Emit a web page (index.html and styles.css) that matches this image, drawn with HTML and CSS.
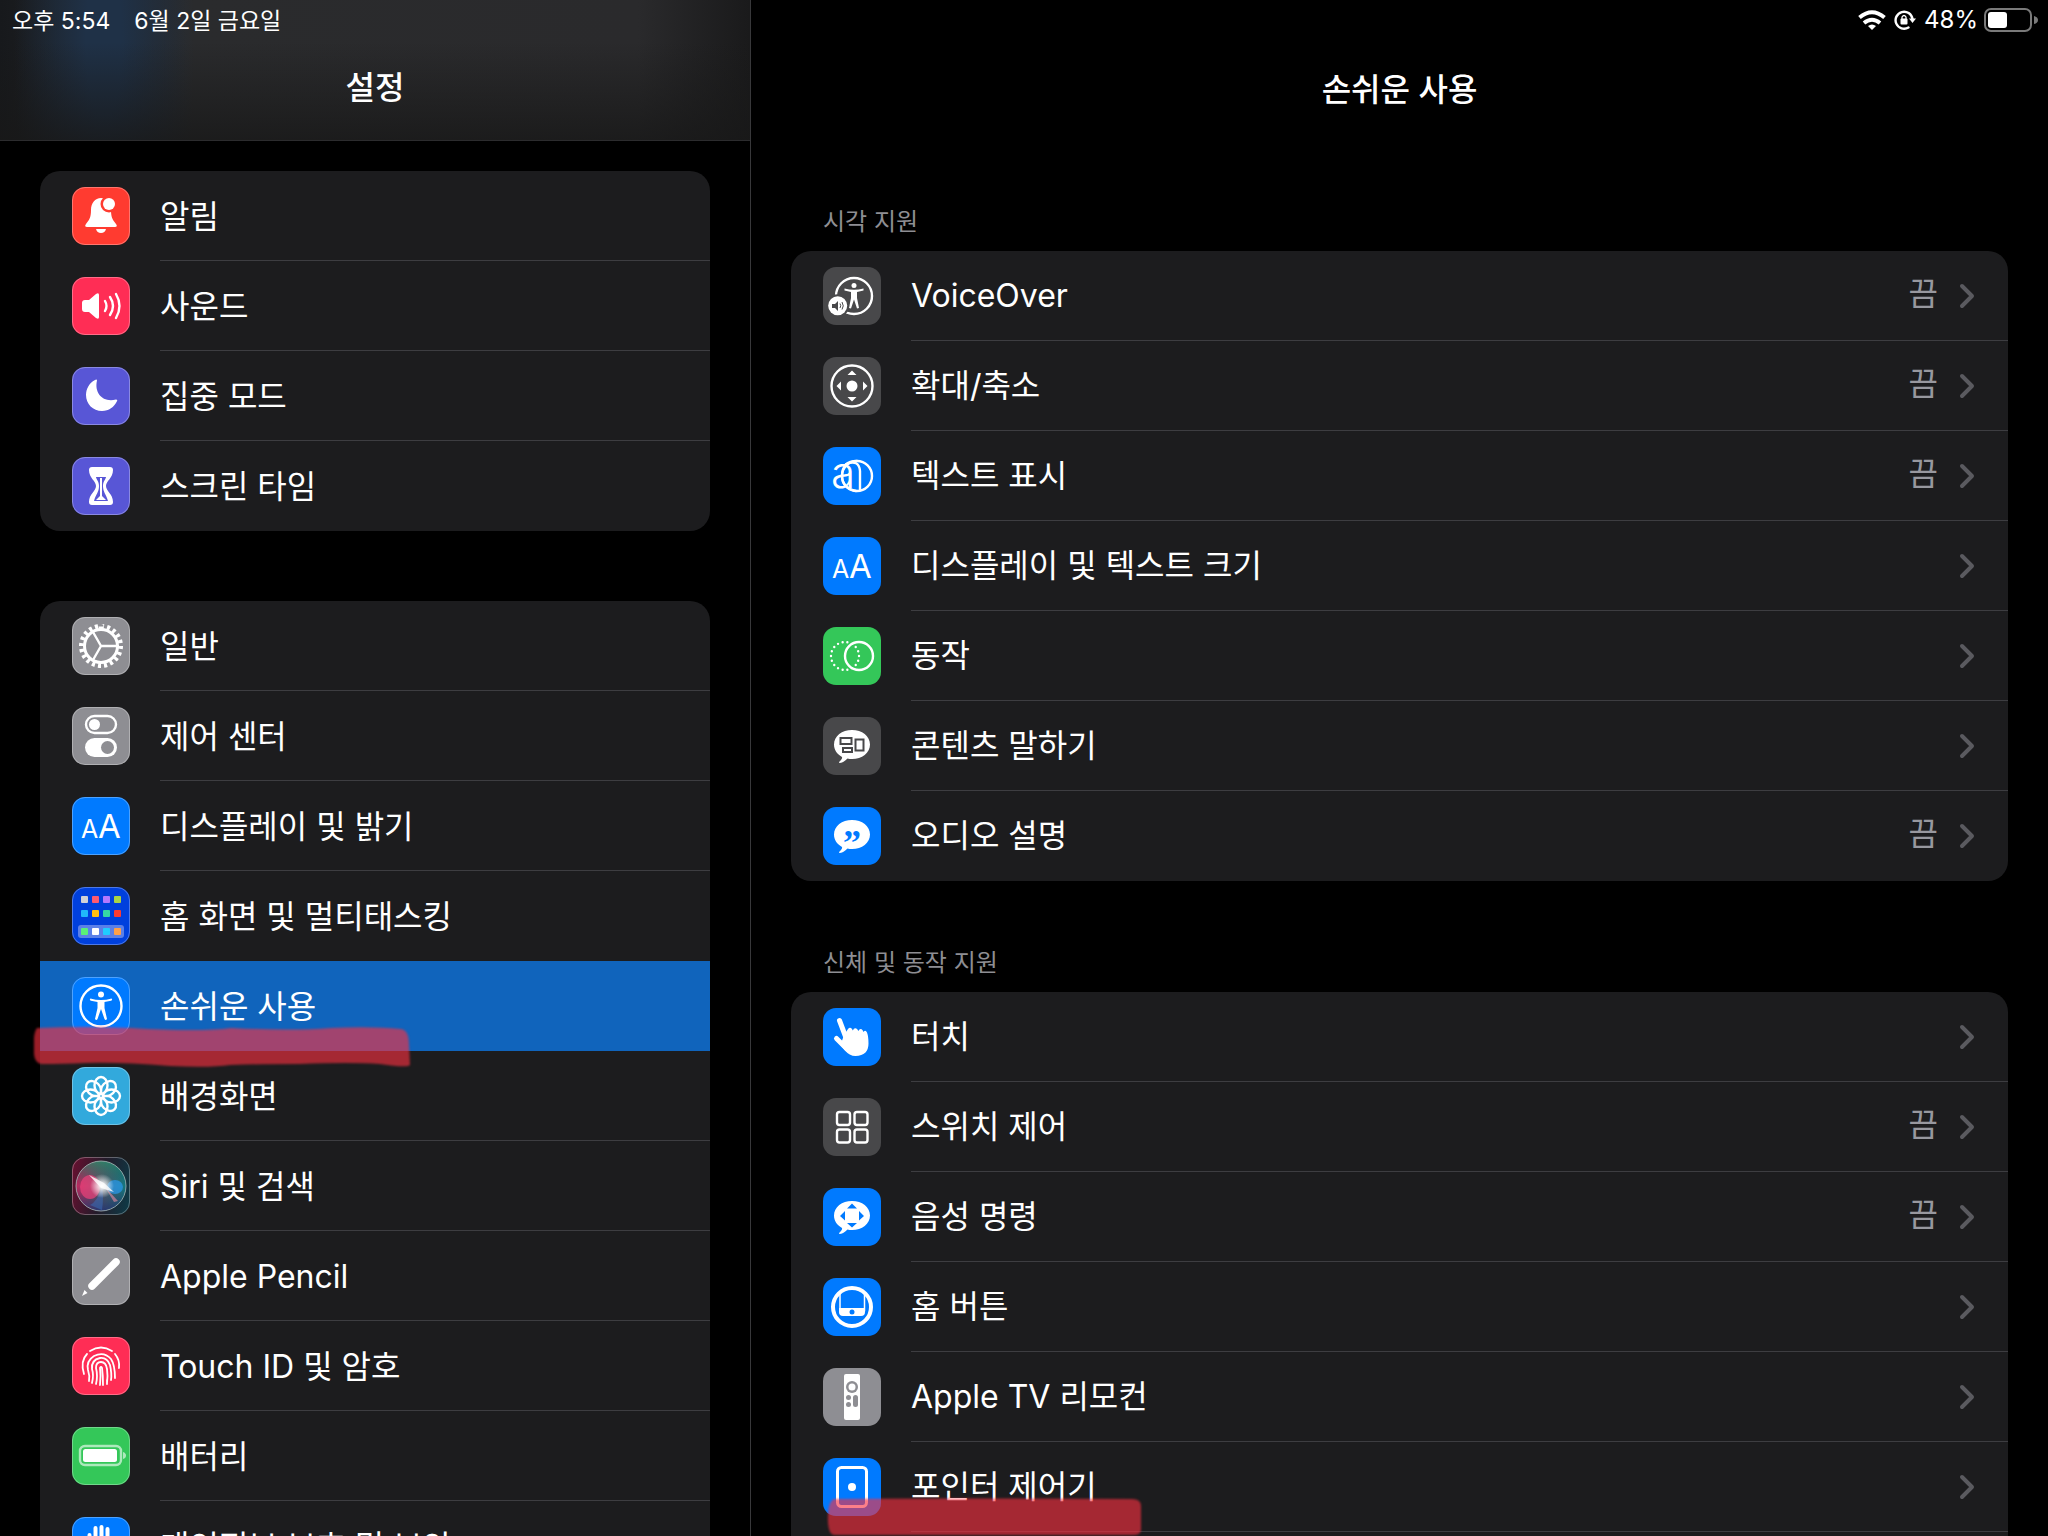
FILE: index.html
```
<!DOCTYPE html>
<html lang="ko">
<head>
<meta charset="utf-8">
<title>설정</title>
<link rel="stylesheet" href="styles.css">
</head>
<body>
<nav class="sidebar">
	<header class="topbar">
		<div class="status"><span>오후 5:54</span><span>6월 2일 금요일</span></div>
		<h1 class="title">설정</h1>
	</header>
	<ul class="card">
		<li><a class="row" href="#">
			<svg class="icon red" viewBox="0 0 58 58"><path d="M29 11c-6 0-10 5-10 12 0 8-2 10-5 14-1.500 2-.8 3 1 3h28c1.800 0 2.500-1 1-3-3-4-5-6-5-14 0-7-4-12-10-12zM24 42h10q-1 4-5 4t-5-4z"/><circle cx="37" cy="17" r="8.500" fill="#ff3b30"/><circle cx="37" cy="17" r="6"/></svg>
			<span class="label">알림</span></a></li>
		<li><a class="row" href="#">
			<svg class="icon pink" viewBox="0 0 58 58"><path d="M10 26q0-3 3-3h4l7-6q3-2 3 1v22q0 3-3 1l-7-6h-4q-3 0-3-3z"/><path class="line thin" d="M33 24q3 5 0 10M38 20q6 9 0 18M44 17q7 12 0 24"/></svg>
			<span class="label">사운드</span></a></li>
		<li><a class="row" href="#">
			<svg class="icon purple" viewBox="0 0 58 58"><path d="M25 13.500C22 26 31 36 44 32.500q2 0 .8 2C42 40 37 44 30 44c-9 0-16-7-16-16 0-6 3-12 9-15q2-1 2 .5z"/></svg>
			<span class="label">집중 모드</span></a></li>
		<li><a class="row" href="#">
			<svg class="icon purple" viewBox="0 0 58 58"><path d="M20 10h18q3 0 3 3c0 8-7 11-7 16s7 8 7 16q0 3-3 3H20q-3 0-3-3c0-8 7-11 7-16s-7-8-7-16q0-3 3-3z"/><path fill="#5856d6" d="M24 20h10c0 2-3 4-3 9 0 6 3 8 5 15H22c2-7 5-9 5-15 0-5-3-7-3-9z"/><path d="M28 21h2v18l4 4H24l4-4z"/></svg>
			<span class="label">스크린 타임</span></a></li>
	</ul>
	<ul class="card">
		<li><a class="row" href="#">
			<svg class="icon gray" viewBox="0 0 58 58"><circle class="line" cx="29" cy="29" r="16.500"/><circle class="line teeth" cx="29" cy="29" r="19.500" pathLength="40"/><path class="line thin" d="M29 29h17M29 29l-8-14M29 29l-8 14"/></svg>
			<span class="label">일반</span></a></li>
		<li><a class="row" href="#">
			<svg class="icon gray" viewBox="0 0 58 58"><rect class="line thin" x="14" y="9" width="30" height="17" rx="8.500"/><circle cx="22.500" cy="17.500" r="5.500"/><rect x="13" y="31" width="32" height="19" rx="9.500"/><circle cx="35.500" cy="40.500" r="6.500" fill="#8e8e93"/></svg>
			<span class="label">제어 센터</span></a></li>
		<li><a class="row" href="#">
			<svg class="icon blue" viewBox="0 0 58 58"><text x="9" y="41" font-size="25">A</text><text x="26" y="41" font-size="33">A</text></svg>
			<span class="label">디스플레이 및 밝기</span></a></li>
		<li><a class="row" href="#">
			<svg class="icon navy" viewBox="0 0 58 58"><rect x="6" y="38" width="46" height="13" rx="3" fill="#5b80e8"/>
				<rect x="9" y="9" width="7" height="7" rx="1" fill="#d1d1d6"/><rect x="20" y="9" width="7" height="7" rx="1" fill="#ff5a70"/><rect x="31" y="9" width="7" height="7" rx="1" fill="#b478ff"/><rect x="42" y="9" width="7" height="7" rx="1" fill="#a8d545"/>
				<rect x="9" y="23" width="7" height="7" rx="1" fill="#20b8fa"/><rect x="20" y="23" width="7" height="7" rx="1" fill="#ffc010"/><rect x="31" y="23" width="7" height="7" rx="1" fill="#35d6a5"/><rect x="42" y="23" width="7" height="7" rx="1" fill="#ff3b30"/>
				<rect x="9" y="41" width="7" height="7" rx="1" fill="#5af078"/><rect x="20" y="41" width="7" height="7" rx="1"/><rect x="31" y="41" width="7" height="7" rx="1" fill="#20ccff"/><rect x="42" y="41" width="7" height="7" rx="1" fill="#ffa04a"/></svg>
			<span class="label">홈 화면 및 멀티태스킹</span></a></li>
		<li class="marked"><a class="row selected" href="#" aria-current="page">
			<svg class="icon blue" viewBox="0 0 58 58"><circle class="line thin" cx="29" cy="29" r="20.500"/><circle cx="29" cy="17.500" r="3"/><path d="M18.500 21.500q5 1.500 10.500 1.500t10.500-1.500q1.500 1.500-.5 2.200l-6.500 1.300v6l2.500 11q-1.500 2-2.500 0l-3.500-10-3.500 10q-1 2-2.500 0l2.500-11v-6l-6.500-1.300q-2-.7-.5-2.200z"/></svg>
			<span class="label">손쉬운 사용</span></a>
			<svg class="ink ink-side" viewBox="0 0 380 44" aria-hidden="true"><path d="M5 3q40-2 92 0 70 4 100 0 60 3 100 0 40-2 70 1 8 1 8 16l1 20q-3 3-30-1-30-2-80 0-40 0-70 1-20 3-60 1-50-4-85-3-20 1-44 1-8-2-7-15-1-16 3-21z"/></svg></li>
		<li><a class="row" href="#">
			<svg class="icon cyan" viewBox="0 0 58 58"><g class="line thin"><ellipse id="petal" cx="29" cy="18.500" rx="6.500" ry="8.500"/><use href="#petal" transform="rotate(45 29 29)"/><use href="#petal" transform="rotate(90 29 29)"/><use href="#petal" transform="rotate(135 29 29)"/><use href="#petal" transform="rotate(180 29 29)"/><use href="#petal" transform="rotate(225 29 29)"/><use href="#petal" transform="rotate(270 29 29)"/><use href="#petal" transform="rotate(315 29 29)"/></g></svg>
			<span class="label">배경화면</span></a></li>
		<li><a class="row" href="#">
			<svg class="icon siri" viewBox="0 0 58 58">
				<defs>
					<linearGradient id="orb" x1="0" y1="0" x2="1" y2="0"><stop offset="0" stop-color="#d32563"/><stop offset=".45" stop-color="#6a6070"/><stop offset="1" stop-color="#108088"/></linearGradient>
					<linearGradient id="shade" x1="0" y1="0" x2="0" y2="1"><stop offset="0" stop-color="#1f8a62" stop-opacity=".7"/><stop offset=".5" stop-color="#203040" stop-opacity=".1"/><stop offset="1" stop-color="#1c2c70" stop-opacity=".8"/></linearGradient>
					<radialGradient id="glow"><stop offset="0" stop-color="#fff"/><stop offset=".3" stop-color="#fff" stop-opacity=".75"/><stop offset="1" stop-color="#fff" stop-opacity="0"/></radialGradient>
				</defs>
				<circle cx="29" cy="29" r="25" fill="url(#orb)"/><circle cx="29" cy="29" r="25" fill="url(#shade)"/>
				<ellipse cx="18" cy="30" rx="10" ry="12" fill="#f0407a" opacity=".7"/><ellipse cx="43" cy="30" rx="8" ry="7" fill="#2a9af0" opacity=".7"/><path d="M33 30l13 14-4 1z" fill="#e88aa0" opacity=".6"/><path d="M30 30q-5 15-12 18l12 5q2-12 0-23z" fill="#3a70c0" opacity=".5"/>
				<circle cx="30" cy="29" r="12" fill="url(#glow)"/><path d="M17 18l15 8 10 9-13-4z" opacity=".8"/><circle cx="29" cy="29" r="25" fill="none" stroke="#a8b8b8" stroke-width="1" opacity=".8"/></svg>
			<span class="label">Siri 및 검색</span></a></li>
		<li><a class="row" href="#">
			<svg class="icon gray" viewBox="0 0 58 58"><path class="line" stroke-width="7.500" d="M44 15L20 39"/><path d="M12.500 43l3 3-5.500 3z"/></svg>
			<span class="label">Apple Pencil</span></a></li>
		<li><a class="row" href="#">
			<svg class="icon pink" viewBox="0 0 58 58"><path class="line fine" d="M18 14q11-7 22 0M12 37q-4-13 3-20M43 17q5 6 4 14M17 44q1-5-1-11-2-9 6-14 10-5 17 3 4 6 4 19M20 46q2-8 0-14-1-9 8-11 7-1 10 7 2 9 1 15M24 47q2-8 0-16 0-6 5-6t6 7q1 7 0 14M28 48q1-9 0-17 1-2 2 0 1 7 1 17M35 43v4"/></svg>
			<span class="label">Touch ID 및 암호</span></a></li>
		<li><a class="row" href="#">
			<svg class="icon green" viewBox="0 0 58 58"><rect class="line thin" x="8" y="19" width="41" height="19" rx="5" opacity=".6"/><rect x="11" y="22" width="34" height="13" rx="2.500"/><path d="M51 25q3 1 3 3.500T51 32z" opacity=".6"/></svg>
			<span class="label">배터리</span></a></li>
		<li><a class="row" href="#">
			<svg class="icon blue" viewBox="0 0 58 58"><path class="line" stroke-width="4" d="M17.500 18v18M23.500 11v22M29.500 10v22M35.500 12v22M43 26l-5 12"/><path d="M15.500 30h22l3 2-3 9q-3 8-10 8-9 0-12-10z"/></svg>
			<span class="label">개인정보 보호 및 보안</span></a></li>
	</ul>
</nav>

<main class="detail">
	<header class="topbar">
		<div class="status status-right">
			<svg class="wifi" viewBox="0 0 28 20"><path d="M14 20l-4-4q4-3 8 0z"/><path class="line" stroke-width="4" stroke-linecap="butt" d="M1.500 7.500q12.500-10.500 25 0M6 13q8-6.500 16 0"/></svg>
			<svg class="lock" viewBox="0 0 22 20"><path class="line thin" d="M14.500 17.500A8.500 8.500 0 1 1 18.500 9"/><path d="M15 8.500h7L18.500 13z"/><rect x="6.500" y="8.500" width="7" height="6" rx="1"/><path class="line" stroke-width="1.300" d="M8 9V7q2-3 4 0v2"/></svg>
			<span class="percent">48%</span>
			<svg class="battery" viewBox="0 0 54 24"><rect x="1" y="1" width="46" height="22" rx="6" fill="none" stroke="#7a7a7a" stroke-width="2"/><rect x="4" y="4" width="19" height="16" rx="3"/><path d="M50 8q4 1 4 4t-4 4z" fill="#7a7a7a"/></svg>
		</div>
		<h1 class="title">손쉬운 사용</h1>
	</header>

	<section>
		<h2 class="caption">시각 지원</h2>
		<ul class="card">
			<li><a class="row" href="#">
				<svg class="icon dark" viewBox="0 0 58 58"><circle class="line thin" cx="31" cy="29" r="18"/><circle cx="31" cy="18.500" r="2.500"/><path d="M21.500 21.500q9.500 2.500 19 0v2l-6.500 1.500v6l2 10-2 .5L31 32.500l-3 9-2-.5 2-10v-6l-6.500-1.500z"/><circle cx="14.700" cy="38.700" r="11.500" fill="#48484a"/><circle cx="14.700" cy="38.700" r="9.500"/><path fill="#48484a" d="M9 37h3l3-3v10l-3-3H9z"/><path d="M17 36.500q1.500 2 0 4.500M19 35q2.500 4 0 7.500" fill="none" stroke="#48484a"/></svg>
				<span class="label">VoiceOver</span><span class="value">끔</span><svg class="chevron" viewBox="0 0 14 24"><path d="M2 2l10 10L2 22"/></svg></a></li>
			<li><a class="row" href="#">
				<svg class="icon dark" viewBox="0 0 58 58"><circle class="line thin" cx="29" cy="29" r="20.500"/><circle cx="29" cy="29" r="5.500"/><path d="M24.500 18l4.500-4.500 4.500 4.500zM24.500 40l4.500 4.500 4.500-4.500zM18 24.500L13.500 29l4.500 4.500zM40 24.500l4.500 4.500-4.500 4.500z"/></svg>
				<span class="label">확대/축소</span><span class="value">끔</span><svg class="chevron" viewBox="0 0 14 24"><path d="M2 2l10 10L2 22"/></svg></a></li>
			<li><a class="row" href="#">
				<svg class="icon blue" viewBox="0 0 58 58"><circle class="line thin" cx="34" cy="29" r="15"/><path class="line thin" d="M34 14q-15 0-15 15 0 12 14 15"/><text class="light" x="8" y="41" font-size="44">a</text><path class="line thin" d="M23 17q13-5 14 7v18"/></svg>
				<span class="label">텍스트 표시</span><span class="value">끔</span><svg class="chevron" viewBox="0 0 14 24"><path d="M2 2l10 10L2 22"/></svg></a></li>
			<li><a class="row" href="#">
				<svg class="icon blue" viewBox="0 0 58 58"><text x="9" y="41" font-size="25">A</text><text x="26" y="41" font-size="33">A</text></svg>
				<span class="label">디스플레이 및 텍스트 크기</span><svg class="chevron" viewBox="0 0 14 24"><path d="M2 2l10 10L2 22"/></svg></a></li>
			<li><a class="row" href="#">
				<svg class="icon green" viewBox="0 0 58 58"><circle class="line dots" cx="22" cy="29" r="14" pathLength="36"/><circle class="line thin" cx="36" cy="29" r="14"/></svg>
				<span class="label">동작</span><svg class="chevron" viewBox="0 0 14 24"><path d="M2 2l10 10L2 22"/></svg></a></li>
			<li><a class="row" href="#">
				<svg class="icon dark" viewBox="0 0 58 58"><path id="bubble" d="M29 13c10 0 18 6 18 14.500S39 42 29 42c-2 0-3 0-4.500-.5-3 3-6 4.500-8 4.500q-1 0 0-1.500c2-2 3-3 2.500-4.500-5-3-8-7-8-12.500C11 19 19 13 29 13z"/><g fill="none" stroke="#48484a" stroke-width="2"><rect x="17.500" y="21" width="11" height="6"/><rect x="20" y="31" width="9" height="4"/><rect x="32.500" y="22.500" width="8" height="11"/></g></svg>
				<span class="label">콘텐츠 말하기</span><svg class="chevron" viewBox="0 0 14 24"><path d="M2 2l10 10L2 22"/></svg></a></li>
			<li><a class="row" href="#">
				<svg class="icon blue" viewBox="0 0 58 58"><use href="#bubble"/><text class="quote" x="29" y="48" font-size="36">”</text></svg>
				<span class="label">오디오 설명</span><span class="value">끔</span><svg class="chevron" viewBox="0 0 14 24"><path d="M2 2l10 10L2 22"/></svg></a></li>
		</ul>
	</section>

	<section>
		<h2 class="caption">신체 및 동작 지원</h2>
		<ul class="card card-more">
			<li><a class="row" href="#">
				<svg class="icon blue" viewBox="0 0 58 58"><path class="line" stroke-width="5" d="M16.500 12.500L25 35M13.500 30.500L24 41"/><path d="M21 27l4-6q2-2.500 4 0l.8 1.500q1.800-4 4.700-1l.8 1.500q2-3.500 4.500-.5l.7 1.500q2-2.500 3.500.5 1.500 4 1.500 11 0 12-13 12.500-6 0-11-6l-4-5z"/></svg>
				<span class="label">터치</span><svg class="chevron" viewBox="0 0 14 24"><path d="M2 2l10 10L2 22"/></svg></a></li>
			<li><a class="row" href="#">
				<svg class="icon dark" viewBox="0 0 58 58"><g class="line thin"><rect x="14" y="14" width="13" height="13" rx="2.500"/><rect x="31.500" y="14" width="13" height="13" rx="2.500"/><rect x="14" y="31.500" width="13" height="13" rx="2.500"/><rect x="31.500" y="31.500" width="13" height="13" rx="2.500"/></g></svg>
				<span class="label">스위치 제어</span><span class="value">끔</span><svg class="chevron" viewBox="0 0 14 24"><path d="M2 2l10 10L2 22"/></svg></a></li>
			<li><a class="row" href="#">
				<svg class="icon blue" viewBox="0 0 58 58"><use href="#bubble"/><path fill="#007aff" d="M24 20.500l5-5 5 5zM24 35l5 4.500 5-4.500zM22 23v9.500L17 28zM36 23v9.500l5-4.500z"/></svg>
				<span class="label">음성 명령</span><span class="value">끔</span><svg class="chevron" viewBox="0 0 14 24"><path d="M2 2l10 10L2 22"/></svg></a></li>
			<li><a class="row" href="#">
				<svg class="icon blue" viewBox="0 0 58 58"><circle class="line" stroke-width="4" cx="29" cy="29" r="19"/><path class="line" stroke-width="1.500" d="M17 15v18M41.500 15v18"/><path d="M16 30h26v4q0 4-4 4H20q-4 0-4-4z"/><circle cx="29" cy="34" r="2.500" fill="#007aff"/></svg>
				<span class="label">홈 버튼</span><svg class="chevron" viewBox="0 0 14 24"><path d="M2 2l10 10L2 22"/></svg></a></li>
			<li><a class="row" href="#">
				<svg class="icon gray" viewBox="0 0 58 58"><rect x="21" y="6" width="16" height="46" rx="2"/><g fill="#8e8e93"><circle cx="29" cy="19" r="6"/><circle cx="25.500" cy="29.500" r="2.500"/><circle cx="25.500" cy="36.500" r="2.500"/><rect x="30" y="27" width="5" height="12" rx="2.500"/></g><circle cx="29" cy="19" r="3.500"/></svg>
				<span class="label">Apple TV 리모컨</span><svg class="chevron" viewBox="0 0 14 24"><path d="M2 2l10 10L2 22"/></svg></a></li>
			<li class="marked"><a class="row" href="#">
				<svg class="icon blue" viewBox="0 0 58 58"><rect class="line" x="14.500" y="9.500" width="29" height="39" rx="4"/><circle cx="29" cy="29" r="4"/></svg>
				<span class="label">포인터 제어기</span><svg class="chevron" viewBox="0 0 14 24"><path d="M2 2l10 10L2 22"/></svg></a>
				<svg class="ink ink-detail" viewBox="0 0 318 40" aria-hidden="true"><path d="M8 2q60-1 298 0 9 0 9 7v24q0 5-8 5H8q-5 0-6-12-1-21 6-24z"/></svg></li>
		</ul>
	</section>
</main>
</body>
</html>
```
FILE: styles.css
```
* {
	box-sizing: border-box;
}
body {
	margin: 0;
	display: flex;
	height: 100vh;
	overflow: hidden;
	background: #000;
	color: #fff;
	font-family: Inter, "Noto Sans CJK KR", sans-serif;
	font-size: 32px;
}
ul {
	list-style: none;
	margin: 0;
	padding: 0;
}
a {
	color: inherit;
	text-decoration: none;
}

/* columns */
.sidebar {
	flex: 0 0 auto;
	width: 36.67%;
	overflow: hidden;
	border-right: 1px solid #38383a;
}
.detail {
	flex: 1;
	min-width: 0;
	overflow: hidden;
}
.topbar {
	height: 140px;
}
.sidebar .topbar {
	height: 141px;
	border-bottom: 1px solid #2c2c2e;
	background:
		linear-gradient(to bottom, rgba(24,24,24,0) 30%, rgba(24,24,24,.8)),
		radial-gradient(ellipse 90px 400px at 104px 40px, #1f3147 20%, rgba(31,49,71,0)),
		linear-gradient(to right, #17191c, #2a2b2d 25%, #2a2a2c 85%, #1a1a1b);
}
.status {
	display: flex;
	align-items: center;
	gap: 24px;
	height: 38px;
	padding: 0 12px;
	font-size: 23px;
}
.status-right {
	justify-content: flex-end;
	gap: 8px;
	height: 40px;
	padding-right: 10px;
}
.percent {
	font-size: 24px;
	line-height: 32px;
	margin-right: -2px;
}
.title {
	margin: 0;
	height: 100px;
	line-height: 100px;
	text-align: center;
	font-size: 32px;
	font-weight: 500;
}
.wifi {
	width: 28px;
	height: 20px;
}
.lock {
	width: 22px;
	height: 20px;
}
.battery {
	width: 54px;
	height: 24px;
}

/* lists */
.card {
	margin: 0 40px;
	background: #1c1c1e;
	border-radius: 20px;
}
.sidebar .card {
	margin-top: 30px;
}
.sidebar .card + .card {
	margin-top: 70px;
}
.caption {
	display: flex;
	align-items: flex-end;
	height: 111px;
	margin: 0 72px;
	padding-bottom: 11px;
	line-height: 36px;
	font-size: 24px;
	font-weight: 400;
	color: #8e8e93;
}
.row {
	display: flex;
	align-items: center;
	height: 90px;
	padding: 0 34px 0 32px;
	/* divider starts under the label */
	background: linear-gradient(#3d3d41, #3d3d41) 120px 100% / 100% 1px no-repeat;
}
.card li:last-child .row {
	background: none;
}
.card-more {
	padding-bottom: 90px;
}
.card-more li:last-child .row {
	background: linear-gradient(#3d3d41, #3d3d41) 120px 100% / 100% 1px no-repeat;
}
.sidebar li:has(+ .marked) .row {
	background: none;
}
.card .row.selected {
	background: #1064bc;
}
.label,
.value {
	line-height: 48px;
	white-space: nowrap;
}
.label {
	flex: 1;
}
.sidebar .label {
	padding-top: 2px;
}
.value {
	color: #98989f;
	margin-right: 22px;
	padding-bottom: 4px;
}
.chevron {
	width: 14px;
	height: 24px;
	fill: none;
	stroke: #5a5a5f;
	stroke-width: 4;
	stroke-linecap: round;
	stroke-linejoin: round;
	overflow: visible;
}

/* icons */
svg {
	flex: none;
	display: block;
	fill: #fff;
}
svg text {
	font-family: Inter, sans-serif;
}
.icon {
	width: 58px;
	height: 58px;
	margin-right: 30px;
	border-radius: 13px;
}
.sidebar .icon {
	outline: 1px solid rgba(255,255,255,.3);
	outline-offset: -1px;
}
.red { background: #ff3b30; }
.pink { background: #ff2d55; }
.purple { background: #5856d6; }
.gray { background: #8e8e93; }
.blue { background: #007aff; }
.navy { background: #0040dd; }
.cyan { background: #32a9dc; }
.green { background: #34c759; }
.dark { background: #48484a; }
.siri {
	background: linear-gradient(100deg, #6a1030, #241b2a 50%, #0c3c48);
}
.line {
	fill: none;
	stroke: #fff;
	stroke-linecap: round;
}
.wifi .line {
	stroke-linecap: butt;
}
.line:not([stroke-width]) {
	stroke-width: 3;
}
.line.thin {
	stroke-width: 2.4;
}
.line.fine {
	stroke-width: 1.8;
}
.line.teeth {
	stroke-width: 5;
	stroke-linecap: butt;
	stroke-dasharray: 1 1;
}
.line.dots {
	stroke-width: 2.4;
	stroke-dasharray: 0 2;
}
svg .light {
	font-weight: 300;
}
svg .quote {
	font-family: "Liberation Serif", serif;
	font-weight: 700;
	text-anchor: middle;
	fill: #007aff;
}

/* marker strokes */
.marked {
	position: relative;
}
.ink {
	position: absolute;
	fill: rgba(250,49,64,.62);
	filter: blur(1px);
	pointer-events: none;
}
.ink-side {
	left: -6px;
	top: 64px;
	width: 380px;
	height: 44px;
}
.ink-detail {
	left: 35px;
	top: 55px;
	width: 318px;
	height: 40px;
}
```
